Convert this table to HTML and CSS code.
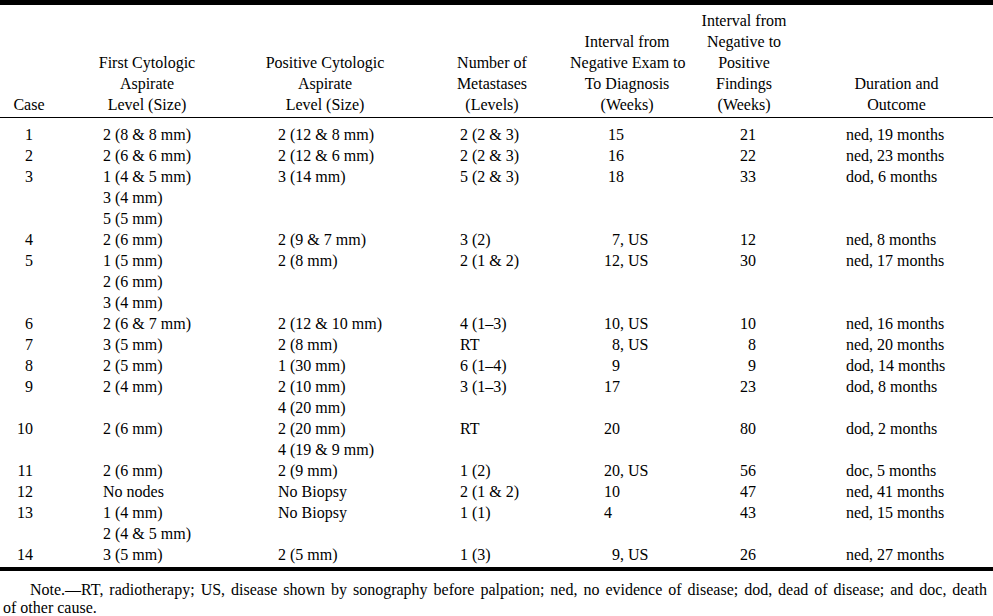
FILE: index.html
```html
<!DOCTYPE html>
<html lang="en">
<head>
<meta charset="utf-8">
<title>Cases</title>
<link rel="stylesheet" href="styles.css">
</head>
<body>
<table class="data">
  <colgroup>
    <col class="c-case">
    <col class="c-first">
    <col class="c-pos">
    <col class="c-num">
    <col class="c-int1">
    <col class="c-int2">
    <col class="c-out">
  </colgroup>
  <thead>
    <tr>
      <th>Case</th>
      <th>First Cytologic<br>Aspirate<br>Level (Size)</th>
      <th>Positive Cytologic<br>Aspirate<br>Level (Size)</th>
      <th>Number of<br>Metastases<br>(Levels)</th>
      <th>Interval from<br>Negative Exam to<br>To Diagnosis<br>(Weeks)</th>
      <th>Interval from<br>Negative to<br>Positive<br>Findings<br>(Weeks)</th>
      <th class="h-out">Duration and<br>Outcome</th>
    </tr>
  </thead>
  <tbody>
    <tr class="first">
      <td class="case">1</td><td class="first-asp">2 (8 &amp; 8 mm)</td><td class="pos-asp">2 (12 &amp; 8 mm)</td><td class="num">2 (2 &amp; 3)</td><td class="int1"><span class="nudge">15</span></td><td class="int2">21</td><td class="out">ned, 19 months</td>
    </tr>
    <tr>
      <td class="case">2</td><td class="first-asp">2 (6 &amp; 6 mm)</td><td class="pos-asp">2 (12 &amp; 6 mm)</td><td class="num">2 (2 &amp; 3)</td><td class="int1"><span class="nudge">16</span></td><td class="int2">22</td><td class="out">ned, 23 months</td>
    </tr>
    <tr>
      <td class="case">3</td><td class="first-asp">1 (4 &amp; 5 mm)<br>3 (4 mm)<br>5 (5 mm)</td><td class="pos-asp">3 (14 mm)</td><td class="num">5 (2 &amp; 3)</td><td class="int1"><span class="nudge">18</span></td><td class="int2">33</td><td class="out">dod, 6 months</td>
    </tr>
    <tr>
      <td class="case">4</td><td class="first-asp">2 (6 mm)</td><td class="pos-asp">2 (9 &amp; 7 mm)</td><td class="num">3 (2)</td><td class="int1">&#8199;7, US</td><td class="int2">12</td><td class="out">ned, 8 months</td>
    </tr>
    <tr>
      <td class="case">5</td><td class="first-asp">1 (5 mm)<br>2 (6 mm)<br>3 (4 mm)</td><td class="pos-asp">2 (8 mm)</td><td class="num">2 (1 &amp; 2)</td><td class="int1">12, US</td><td class="int2">30</td><td class="out">ned, 17 months</td>
    </tr>
    <tr>
      <td class="case">6</td><td class="first-asp">2 (6 &amp; 7 mm)</td><td class="pos-asp">2 (12 &amp; 10 mm)</td><td class="num">4 (1–3)</td><td class="int1">10, US</td><td class="int2">10</td><td class="out">ned, 16 months</td>
    </tr>
    <tr>
      <td class="case">7</td><td class="first-asp">3 (5 mm)</td><td class="pos-asp">2 (8 mm)</td><td class="num">RT</td><td class="int1">&#8199;8, US</td><td class="int2">8</td><td class="out">ned, 20 months</td>
    </tr>
    <tr>
      <td class="case">8</td><td class="first-asp">2 (5 mm)</td><td class="pos-asp">1 (30 mm)</td><td class="num">6 (1–4)</td><td class="int1">&#8199;9</td><td class="int2">9</td><td class="out">dod, 14 months</td>
    </tr>
    <tr>
      <td class="case">9</td><td class="first-asp">2 (4 mm)</td><td class="pos-asp">2 (10 mm)<br>4 (20 mm)</td><td class="num">3 (1–3)</td><td class="int1">17</td><td class="int2">23</td><td class="out">dod, 8 months</td>
    </tr>
    <tr>
      <td class="case">10</td><td class="first-asp">2 (6 mm)</td><td class="pos-asp">2 (20 mm)<br>4 (19 &amp; 9 mm)</td><td class="num">RT</td><td class="int1">20</td><td class="int2">80</td><td class="out">dod, 2 months</td>
    </tr>
    <tr>
      <td class="case">11</td><td class="first-asp">2 (6 mm)</td><td class="pos-asp">2 (9 mm)</td><td class="num">1 (2)</td><td class="int1">20, US</td><td class="int2">56</td><td class="out">doc, 5 months</td>
    </tr>
    <tr>
      <td class="case">12</td><td class="first-asp">No nodes</td><td class="pos-asp">No Biopsy</td><td class="num">2 (1 &amp; 2)</td><td class="int1">10</td><td class="int2">47</td><td class="out">ned, 41 months</td>
    </tr>
    <tr>
      <td class="case">13</td><td class="first-asp">1 (4 mm)<br>2 (4 &amp; 5 mm)</td><td class="pos-asp">No Biopsy</td><td class="num">1 (1)</td><td class="int1">4</td><td class="int2">43</td><td class="out">ned, 15 months</td>
    </tr>
    <tr class="last">
      <td class="case">14</td><td class="first-asp">3 (5 mm)</td><td class="pos-asp">2 (5 mm)</td><td class="num">1 (3)</td><td class="int1">&#8199;9, US</td><td class="int2">26</td><td class="out">ned, 27 months</td>
    </tr>
  </tbody>
</table>
<p class="note"><span class="note-line">Note.—RT, radiotherapy; US, disease shown by sonography before palpation; ned, no evidence of disease; dod, dead of disease; and doc, death</span> of other cause.</p>
</body>
</html>
```

FILE: styles.css
```css
html, body {
  margin: 0;
  padding: 0;
  background: #ffffff;
  color: #000000;
}

body {
  font-family: "Liberation Serif", "Times New Roman", serif;
  font-size: 16px;
}

.data {
  width: 993px;
  table-layout: fixed;
  border-collapse: separate;
  border-spacing: 0;
  border-top: 5px solid #000;
  border-bottom: 4px solid #000;
}

.c-case { width: 58px; }
.c-first { width: 178px; }
.c-pos { width: 178px; }
.c-num { width: 156px; }
.c-int1 { width: 114px; }
.c-int2 { width: 120px; }
.c-out { width: 189px; }

.data th {
  font-weight: normal;
  text-align: center;
  vertical-align: bottom;
  line-height: 21px;
  padding: 5px 0 2px;
  border-bottom: 1px solid #000;
  white-space: nowrap;
}

.data th.h-out {
  padding-right: 4px;
}

.data td {
  vertical-align: top;
  line-height: 21px;
  padding: 0;
  white-space: nowrap;
}

.data tr.first td {
  padding-top: 6px;
}

.data tr.last td {
  padding-bottom: 2px;
}

.data td.case {
  text-align: right;
  padding-right: 25px;
}

.data td.first-asp { padding-left: 45px; }
.data td.pos-asp { padding-left: 42px; }
.data td.num { padding-left: 46px; }
.data td.int1 { padding-left: 34px; }

.data td.int2 {
  text-align: right;
  padding-right: 48px;
}

.data td.out { padding-left: 42px; }

.nudge {
  padding-left: 4px;
}

.note {
  margin: 10px 0 0;
  padding: 0 6px 0 3px;
  font-size: 16px;
  line-height: 18px;
}

.note-line {
  display: block;
  text-indent: 27px;
  text-align: justify;
  text-align-last: justify;
}
```
